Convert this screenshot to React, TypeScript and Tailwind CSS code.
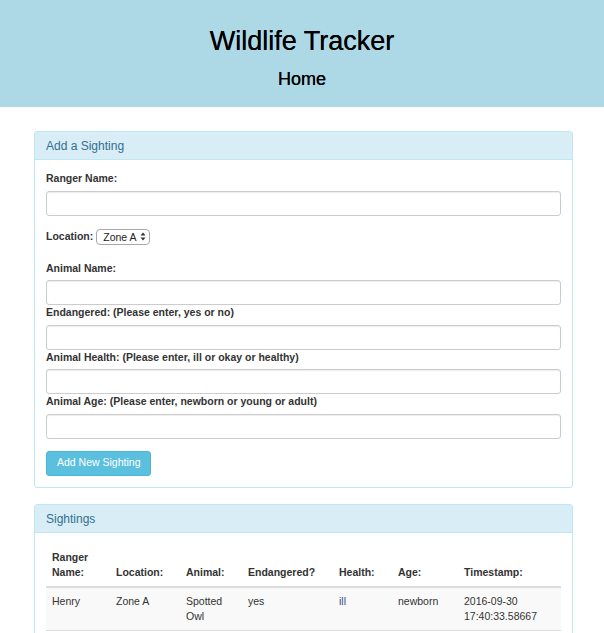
import { useState } from 'react';

type Sighting = {
  ranger: string;
  location: string;
  animal: string;
  endangered: string;
  health: string;
  age: string;
  timestamp: string;
};

const sightings: Sighting[] = [
  {
    ranger: 'Henry',
    location: 'Zone A',
    animal: 'Spotted Owl',
    endangered: 'yes',
    health: 'ill',
    age: 'newborn',
    timestamp: '2016-09-30 17:40:33.58667',
  },
];

const inputCls =
  'block w-full h-[25px] rounded-[3px] border border-[#ccc] bg-white px-[9px] text-[10.5px] text-[#555] shadow-[inset_0_1px_1px_rgba(0,0,0,0.075)] outline-none';

const labelCls = 'block text-[10.5px] leading-[15px] font-bold text-[#333]';

function Field({ label, className = '' }: { label: string; className?: string }) {
  return (
    <div className={className}>
      <label className={`${labelCls} mb-[4.5px]`}>{label}</label>
      <input type="text" className={inputCls} />
    </div>
  );
}

function Panel({ title, children, className = '' }: { title: string; children: React.ReactNode; className?: string }) {
  return (
    <div className={`rounded-[3px] border border-[#bce8f1] bg-white ${className}`}>
      <div className="h-[28px] rounded-t-[2px] border-b border-[#bce8f1] bg-[#d9edf7] px-[11px] text-[12px] leading-[28px] text-[#31708f]">
        {title}
      </div>
      {children}
    </div>
  );
}

export default function App() {
  const [zone, setZone] = useState('Zone A');

  return (
    <div className="min-h-screen bg-white font-['Liberation_Sans',Arial,sans-serif] text-[#333]">
      <header className="h-[107px] bg-[#add8e6] pt-[26px] text-center text-black">
        <h1 className="text-[27px] leading-[30px] font-normal [text-shadow:0_0_0.6px_#000]">Wildlife Tracker</h1>
        <h3 className="mt-[13px] text-[18px] leading-[20px] font-normal [text-shadow:0_0_0.4px_#000]">Home</h3>
      </header>

      <div className="ml-[34px] w-[539px] pt-[24px] pb-[20px]">
        <Panel title="Add a Sighting">
          <form className="px-[11px] pt-[11px] pb-[11px]" onSubmit={(e) => e.preventDefault()}>
            <Field label="Ranger Name:" />

            <div className="mt-[11px] flex h-[20px] items-center gap-[3px]">
              <label className="text-[10.5px] font-bold">Location:</label>
              <div className="relative flex">
                <select
                  value={zone}
                  onChange={(e) => setZone(e.target.value)}
                  className="block h-[16px] w-[54px] appearance-none rounded-[4px] border border-[#a9a9a9] bg-white pl-[6px] text-[10.5px] leading-[14px] text-[#222] outline-none"
                >
                  <option>Zone A</option>
                  <option>Zone B</option>
                  <option>Zone C</option>
                </select>
                <svg
                  className="pointer-events-none absolute right-[4px] top-[3.5px]"
                  width="6"
                  height="9"
                  viewBox="0 0 6 9"
                >
                  <path d="M3 0.5 L5.5 3.5 H0.5 Z" fill="#333" />
                  <path d="M3 8.5 L5.5 5.5 H0.5 Z" fill="#333" />
                </svg>
              </div>
            </div>

            <Field label="Animal Name:" className="mt-[14px]" />
            <Field label="Endangered: (Please enter, yes or no)" />
            <Field label="Animal Health: (Please enter, ill or okay or healthy)" />
            <Field label="Animal Age: (Please enter, newborn or young or adult)" />

            <button
              type="submit"
              className="mt-[12px] h-[25px] rounded-[3px] border border-[#46b8da] bg-[#5bc0de] px-[10px] text-[10.5px] text-white"
            >
              Add New Sighting
            </button>
          </form>
        </Panel>

        <Panel title="Sightings" className="mt-[16px]">
          <div className="px-[11px] pt-[11px] pb-[11px]">
            <table className="w-full table-fixed border-collapse text-left text-[10.5px] leading-[15px]">
              <thead>
                <tr className="border-b-2 border-[#ddd] align-bottom">
                  <th className="w-[64px] p-[6px] font-bold">Ranger Name:</th>
                  <th className="w-[70px] p-[6px] font-bold">Location:</th>
                  <th className="w-[62px] p-[6px] font-bold">Animal:</th>
                  <th className="w-[91px] p-[6px] font-bold">Endangered?</th>
                  <th className="w-[59px] p-[6px] font-bold">Health:</th>
                  <th className="w-[66px] p-[6px] font-bold">Age:</th>
                  <th className="p-[6px] font-bold">Timestamp:</th>
                </tr>
              </thead>
              <tbody>
                {sightings.map((s, i) => (
                  <tr key={i} className="border-b border-[#ddd] bg-[#f9f9f9] align-top">
                    <td className="p-[6px]">{s.ranger}</td>
                    <td className="p-[6px]">{s.location}</td>
                    <td className="p-[6px]">{s.animal}</td>
                    <td className="p-[6px]">{s.endangered}</td>
                    <td className="p-[6px] text-[#3b4a85]">{s.health}</td>
                    <td className="p-[6px]">{s.age}</td>
                    <td className="p-[6px]">{s.timestamp}</td>
                  </tr>
                ))}
              </tbody>
            </table>
          </div>
        </Panel>
      </div>
    </div>
  );
}
